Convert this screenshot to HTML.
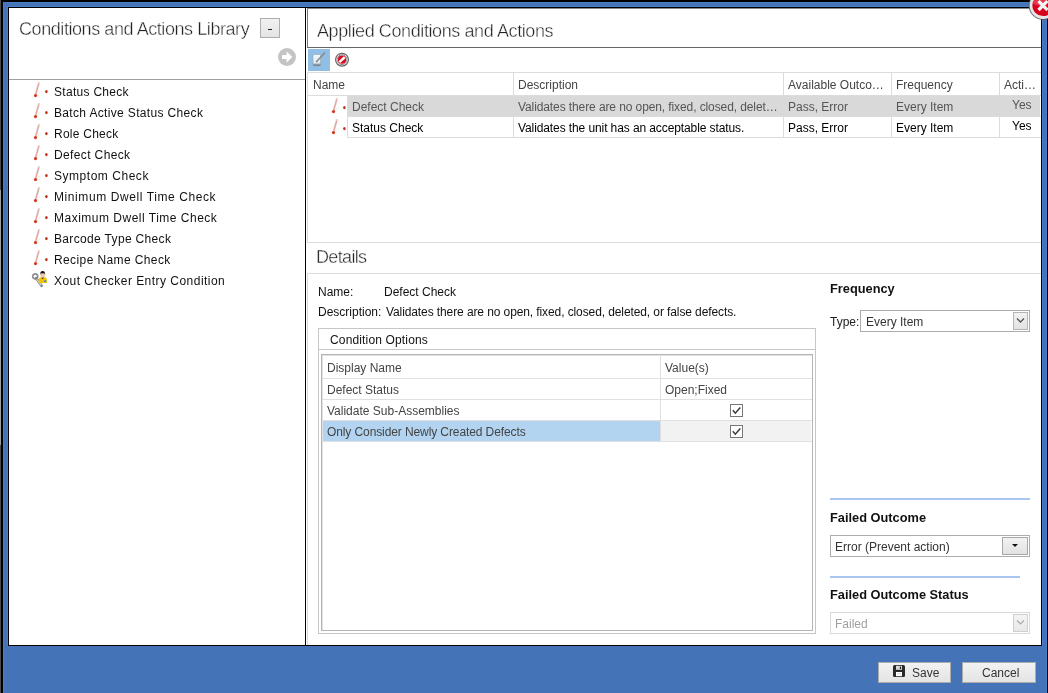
<!DOCTYPE html>
<html><head><meta charset="utf-8">
<style>
*{box-sizing:border-box;margin:0;padding:0}
html,body{width:1048px;height:693px;overflow:hidden;background:#fff}
body{position:relative;font-family:"Liberation Sans",sans-serif;font-size:12px;color:#000}
.a{position:absolute}
.t{position:absolute;white-space:nowrap;font-size:12px;line-height:12px;will-change:transform}
svg{display:block}
</style></head><body>
<div class="a" style="left:0px;top:0px;width:1048px;height:693px;background:#000;"></div>
<div class="a" style="left:0px;top:0px;width:1px;height:693px;background:#4a4a4a;"></div>
<div class="a" style="left:0px;top:190px;width:1px;height:255px;background:#9aa0a0;"></div>
<div class="a" style="left:3px;top:2px;width:1044px;height:691px;background:#4473b8;"></div>
<div class="a" style="left:3px;top:2px;width:1044px;height:1px;background:#4a7ec8;"></div>
<div class="a" style="left:7px;top:6px;width:1036px;height:1px;background:#4a7ec8;"></div>
<div class="a" style="left:3px;top:2px;width:1px;height:691px;background:#4a7ec8;"></div>
<div class="a" style="left:7px;top:6px;width:1px;height:640px;background:#4a7ec8;"></div>
<div class="a" style="left:1042px;top:6px;width:1px;height:640px;background:#4a7ec8;"></div>
<div class="a" style="left:1046px;top:2px;width:1px;height:691px;background:#4a7ec8;"></div>
<div class="a" style="left:8px;top:7px;width:1034px;height:639px;background:#000;"></div>
<div class="a" style="left:9px;top:8px;width:1032px;height:637px;background:#fff;"></div>
<div class="t" style="left:19px;top:20px;font-size:18px;line-height:18px;color:#222;letter-spacing:-0.43px;-webkit-text-stroke:0.4px #fff">Conditions and Actions Library</div>
<div class="a" style="left:260px;top:18px;width:20px;height:20px;background:linear-gradient(#f1f1f1,#e4e4e4);border:1px solid #adadad"></div>
<div class="a" style="left:268px;top:29px;width:4px;height:1px;background:#222;"></div>
<svg class="a" style="left:277px;top:47px" width="20" height="20" viewBox="0 0 20 20">
<circle cx="10" cy="10" r="9" fill="#c4c4c4"/>
<path d="M5 8h4.6V4.3l5.6 5.7-5.6 5.7v-3.7H5z" fill="#fff"/>
</svg>
<div class="a" style="left:9px;top:79px;width:296px;height:1px;background:#a0a0a0;"></div>
<div class="a" style="left:305px;top:8px;width:1px;height:637px;background:#000;"></div>
<svg class="a" style="left:31px;top:82px" width="18" height="18" viewBox="0 0 18 18">
<path d="M7.9 0.9 L4.6 12.6" stroke="#e2d6d6" stroke-width="2.1" stroke-linecap="round"/>
<path d="M7.7 1.6 L4.7 12.4" stroke="#eb9c90" stroke-width="1"/>
<path d="M9.5 9 L6 13" stroke="#efefef" stroke-width="1.1"/>
<circle cx="4.5" cy="13.6" r="1.6" fill="#d6381f"/>
<ellipse cx="15.4" cy="9.6" rx="1.3" ry="1.6" fill="#c0321e"/>
</svg>
<div class="t" style="left:54px;top:86px;font-size:12px;line-height:12px;color:#111;letter-spacing:0.29px;">Status Check</div>
<svg class="a" style="left:31px;top:103px" width="18" height="18" viewBox="0 0 18 18">
<path d="M7.9 0.9 L4.6 12.6" stroke="#e2d6d6" stroke-width="2.1" stroke-linecap="round"/>
<path d="M7.7 1.6 L4.7 12.4" stroke="#eb9c90" stroke-width="1"/>
<path d="M9.5 9 L6 13" stroke="#efefef" stroke-width="1.1"/>
<circle cx="4.5" cy="13.6" r="1.6" fill="#d6381f"/>
<ellipse cx="15.4" cy="9.6" rx="1.3" ry="1.6" fill="#c0321e"/>
</svg>
<div class="t" style="left:54px;top:107px;font-size:12px;line-height:12px;color:#111;letter-spacing:0.34px;">Batch Active Status Check</div>
<svg class="a" style="left:31px;top:124px" width="18" height="18" viewBox="0 0 18 18">
<path d="M7.9 0.9 L4.6 12.6" stroke="#e2d6d6" stroke-width="2.1" stroke-linecap="round"/>
<path d="M7.7 1.6 L4.7 12.4" stroke="#eb9c90" stroke-width="1"/>
<path d="M9.5 9 L6 13" stroke="#efefef" stroke-width="1.1"/>
<circle cx="4.5" cy="13.6" r="1.6" fill="#d6381f"/>
<ellipse cx="15.4" cy="9.6" rx="1.3" ry="1.6" fill="#c0321e"/>
</svg>
<div class="t" style="left:54px;top:128px;font-size:12px;line-height:12px;color:#111;letter-spacing:0.25px;">Role Check</div>
<svg class="a" style="left:31px;top:145px" width="18" height="18" viewBox="0 0 18 18">
<path d="M7.9 0.9 L4.6 12.6" stroke="#e2d6d6" stroke-width="2.1" stroke-linecap="round"/>
<path d="M7.7 1.6 L4.7 12.4" stroke="#eb9c90" stroke-width="1"/>
<path d="M9.5 9 L6 13" stroke="#efefef" stroke-width="1.1"/>
<circle cx="4.5" cy="13.6" r="1.6" fill="#d6381f"/>
<ellipse cx="15.4" cy="9.6" rx="1.3" ry="1.6" fill="#c0321e"/>
</svg>
<div class="t" style="left:54px;top:149px;font-size:12px;line-height:12px;color:#111;letter-spacing:0.37px;">Defect Check</div>
<svg class="a" style="left:31px;top:166px" width="18" height="18" viewBox="0 0 18 18">
<path d="M7.9 0.9 L4.6 12.6" stroke="#e2d6d6" stroke-width="2.1" stroke-linecap="round"/>
<path d="M7.7 1.6 L4.7 12.4" stroke="#eb9c90" stroke-width="1"/>
<path d="M9.5 9 L6 13" stroke="#efefef" stroke-width="1.1"/>
<circle cx="4.5" cy="13.6" r="1.6" fill="#d6381f"/>
<ellipse cx="15.4" cy="9.6" rx="1.3" ry="1.6" fill="#c0321e"/>
</svg>
<div class="t" style="left:54px;top:170px;font-size:12px;line-height:12px;color:#111;letter-spacing:0.53px;">Symptom Check</div>
<svg class="a" style="left:31px;top:187px" width="18" height="18" viewBox="0 0 18 18">
<path d="M7.9 0.9 L4.6 12.6" stroke="#e2d6d6" stroke-width="2.1" stroke-linecap="round"/>
<path d="M7.7 1.6 L4.7 12.4" stroke="#eb9c90" stroke-width="1"/>
<path d="M9.5 9 L6 13" stroke="#efefef" stroke-width="1.1"/>
<circle cx="4.5" cy="13.6" r="1.6" fill="#d6381f"/>
<ellipse cx="15.4" cy="9.6" rx="1.3" ry="1.6" fill="#c0321e"/>
</svg>
<div class="t" style="left:54px;top:191px;font-size:12px;line-height:12px;color:#111;letter-spacing:0.59px;">Minimum Dwell Time Check</div>
<svg class="a" style="left:31px;top:208px" width="18" height="18" viewBox="0 0 18 18">
<path d="M7.9 0.9 L4.6 12.6" stroke="#e2d6d6" stroke-width="2.1" stroke-linecap="round"/>
<path d="M7.7 1.6 L4.7 12.4" stroke="#eb9c90" stroke-width="1"/>
<path d="M9.5 9 L6 13" stroke="#efefef" stroke-width="1.1"/>
<circle cx="4.5" cy="13.6" r="1.6" fill="#d6381f"/>
<ellipse cx="15.4" cy="9.6" rx="1.3" ry="1.6" fill="#c0321e"/>
</svg>
<div class="t" style="left:54px;top:212px;font-size:12px;line-height:12px;color:#111;letter-spacing:0.5px;">Maximum Dwell Time Check</div>
<svg class="a" style="left:31px;top:229px" width="18" height="18" viewBox="0 0 18 18">
<path d="M7.9 0.9 L4.6 12.6" stroke="#e2d6d6" stroke-width="2.1" stroke-linecap="round"/>
<path d="M7.7 1.6 L4.7 12.4" stroke="#eb9c90" stroke-width="1"/>
<path d="M9.5 9 L6 13" stroke="#efefef" stroke-width="1.1"/>
<circle cx="4.5" cy="13.6" r="1.6" fill="#d6381f"/>
<ellipse cx="15.4" cy="9.6" rx="1.3" ry="1.6" fill="#c0321e"/>
</svg>
<div class="t" style="left:54px;top:233px;font-size:12px;line-height:12px;color:#111;letter-spacing:0.34px;">Barcode Type Check</div>
<svg class="a" style="left:31px;top:250px" width="18" height="18" viewBox="0 0 18 18">
<path d="M7.9 0.9 L4.6 12.6" stroke="#e2d6d6" stroke-width="2.1" stroke-linecap="round"/>
<path d="M7.7 1.6 L4.7 12.4" stroke="#eb9c90" stroke-width="1"/>
<path d="M9.5 9 L6 13" stroke="#efefef" stroke-width="1.1"/>
<circle cx="4.5" cy="13.6" r="1.6" fill="#d6381f"/>
<ellipse cx="15.4" cy="9.6" rx="1.3" ry="1.6" fill="#c0321e"/>
</svg>
<div class="t" style="left:54px;top:254px;font-size:12px;line-height:12px;color:#111;letter-spacing:0.39px;">Recipe Name Check</div>
<svg class="a" style="left:30px;top:268px" width="20" height="20" viewBox="0 0 20 20">
<path d="M6 10 L11.6 17.8" stroke="#7d7d7d" stroke-width="2.6" stroke-linecap="round"/>
<path d="M6.6 11 L11.2 17.2" stroke="#d6e4f4" stroke-width="1.1"/>
<circle cx="5.2" cy="8.4" r="2.5" fill="none" stroke="#8f8f8f" stroke-width="1.7"/>
<path d="M8.6 12 Q8.6 9.4 11.2 9.3 L14.2 9.3 Q16.9 9.4 16.9 12 L16.9 15 L8.6 15 Z" fill="#f1c400"/>
<path d="M11.3 9.3 L12.7 11.2 L14.1 9.3 Z" fill="#1a1a1a"/>
<ellipse cx="12.7" cy="7.4" rx="2.2" ry="2.4" fill="#f3c6a6"/>
<path d="M10.2 7.2 Q10 3 12.7 3 Q15.3 3 15.1 7.2 L14.6 5.6 Q12.7 5.1 10.8 5.6 Z" fill="#111"/>
<path d="M14 12.6 L16.2 11.9 L16.2 14 L14 14 Z" fill="#3d8fe0"/>
</svg>
<div class="t" style="left:54px;top:275px;font-size:12px;line-height:12px;color:#111;letter-spacing:0.47px;">Xout Checker Entry Condition</div>
<div class="a" style="left:307px;top:8px;width:1px;height:40px;background:#7a7a7a;"></div>
<div class="a" style="left:307px;top:8px;width:734px;height:1px;background:#8a8a8a;"></div>
<div class="a" style="left:307px;top:47px;width:734px;height:1px;background:#666;"></div>
<div class="t" style="left:317px;top:22px;font-size:18px;line-height:18px;color:#222;letter-spacing:-0.4px;-webkit-text-stroke:0.4px #fff">Applied Conditions and Actions</div>
<div class="a" style="left:308px;top:49px;width:22px;height:22px;background:#90bee4;"></div>
<svg class="a" style="left:311px;top:51px" width="16" height="18" viewBox="0 0 16 18">
<defs><linearGradient id="pg" x1="0" y1="0" x2="0" y2="1"><stop offset="0" stop-color="#f4f8fb"/><stop offset="0.75" stop-color="#dce8ef"/><stop offset="1" stop-color="#4f5f68"/></linearGradient></defs>
<rect x="2" y="3.5" width="7.6" height="11.2" rx="1" fill="url(#pg)" stroke="#8898a2" stroke-width="0.5"/>
<path d="M13.6 2 L5.6 10.4" stroke="#7c7c7c" stroke-width="1.5" stroke-linecap="round"/>
<path d="M13.4 2.2 L6.2 9.8" stroke="#dcdcdc" stroke-width="0.5" stroke-dasharray="0.7 0.7"/>
</svg>
<svg class="a" style="left:334px;top:52px" width="16" height="16" viewBox="0 0 16 16">
<circle cx="8" cy="7.7" r="6.4" fill="#fff" stroke="#666" stroke-width="1.2"/>
<circle cx="8" cy="7.7" r="4.9" fill="none" stroke="#8c8c8c" stroke-width="1"/>
<circle cx="8" cy="7.7" r="4.1" fill="#e2051f"/>
<path d="M5.3 10.1 L10.7 5.3" stroke="#fff" stroke-width="2.5"/>
</svg>
<div class="a" style="left:307px;top:72px;width:734px;height:1px;background:#dcdcdc;"></div>
<div class="a" style="left:307px;top:72px;width:1px;height:171px;background:#dcdcdc;"></div>
<div class="a" style="left:307px;top:95px;width:734px;height:1px;background:#dcdcdc;"></div>
<div class="a" style="left:513px;top:73px;width:1px;height:65px;background:#dcdcdc;"></div>
<div class="a" style="left:783px;top:73px;width:1px;height:65px;background:#dcdcdc;"></div>
<div class="a" style="left:891px;top:73px;width:1px;height:65px;background:#dcdcdc;"></div>
<div class="a" style="left:999px;top:73px;width:1px;height:65px;background:#dcdcdc;"></div>
<div class="a" style="left:348px;top:96px;width:692px;height:20px;background:#d9d9d9;"></div>
<div class="a" style="left:347px;top:96px;width:1px;height:42px;background:#dcdcdc;"></div>
<div class="a" style="left:348px;top:116px;width:693px;height:1px;background:#dcdcdc;"></div>
<div class="a" style="left:347px;top:137px;width:694px;height:1px;background:#dcdcdc;"></div>
<div class="t" style="left:313px;top:79px;font-size:12px;line-height:12px;color:#444;">Name</div>
<div class="t" style="left:518px;top:79px;font-size:12px;line-height:12px;color:#444;">Description</div>
<div class="t" style="left:788px;top:79px;font-size:12px;line-height:12px;color:#444;">Available Outco…</div>
<div class="t" style="left:896px;top:79px;font-size:12px;line-height:12px;color:#444;">Frequency</div>
<div class="t" style="left:1004px;top:79px;font-size:12px;line-height:12px;color:#444;">Acti…</div>
<svg class="a" style="left:329px;top:98px" width="18" height="18" viewBox="0 0 18 18">
<path d="M7.9 0.9 L4.6 12.6" stroke="#e2d6d6" stroke-width="2.1" stroke-linecap="round"/>
<path d="M7.7 1.6 L4.7 12.4" stroke="#eb9c90" stroke-width="1"/>
<path d="M9.5 9 L6 13" stroke="#efefef" stroke-width="1.1"/>
<circle cx="4.5" cy="13.6" r="1.6" fill="#d6381f"/>
<ellipse cx="15.4" cy="9.6" rx="1.3" ry="1.6" fill="#c0321e"/>
</svg>
<div class="t" style="left:352px;top:101px;font-size:12px;line-height:12px;color:#555;">Defect Check</div>
<div class="t" style="left:518px;top:101px;font-size:12px;line-height:12px;color:#555;letter-spacing:-0.1px;">Validates there are no open, fixed, closed, delet…</div>
<div class="t" style="left:788px;top:101px;font-size:12px;line-height:12px;color:#555;">Pass, Error</div>
<div class="t" style="left:896px;top:101px;font-size:12px;line-height:12px;color:#555;">Every Item</div>
<div class="t" style="left:1012px;top:99px;font-size:12px;line-height:12px;color:#555;">Yes</div>
<svg class="a" style="left:329px;top:119px" width="18" height="18" viewBox="0 0 18 18">
<path d="M7.9 0.9 L4.6 12.6" stroke="#e2d6d6" stroke-width="2.1" stroke-linecap="round"/>
<path d="M7.7 1.6 L4.7 12.4" stroke="#eb9c90" stroke-width="1"/>
<path d="M9.5 9 L6 13" stroke="#efefef" stroke-width="1.1"/>
<circle cx="4.5" cy="13.6" r="1.6" fill="#d6381f"/>
<ellipse cx="15.4" cy="9.6" rx="1.3" ry="1.6" fill="#c0321e"/>
</svg>
<div class="t" style="left:352px;top:122px;font-size:12px;line-height:12px;color:#000;">Status Check</div>
<div class="t" style="left:518px;top:122px;font-size:12px;line-height:12px;color:#000;letter-spacing:-0.1px;">Validates the unit has an acceptable status.</div>
<div class="t" style="left:788px;top:122px;font-size:12px;line-height:12px;color:#000;">Pass, Error</div>
<div class="t" style="left:896px;top:122px;font-size:12px;line-height:12px;color:#000;">Every Item</div>
<div class="t" style="left:1012px;top:120px;font-size:12px;line-height:12px;color:#000;">Yes</div>
<div class="a" style="left:307px;top:242px;width:734px;height:1px;background:#dcdcdc;"></div>
<div class="t" style="left:316px;top:248px;font-size:18px;line-height:18px;color:#222;letter-spacing:-0.65px;-webkit-text-stroke:0.4px #fff">Details</div>
<div class="a" style="left:307px;top:273px;width:734px;height:1px;background:#dcdcdc;"></div>
<div class="a" style="left:307px;top:273px;width:1px;height:372px;background:#dcdcdc;"></div>
<div class="t" style="left:318px;top:286px;font-size:12px;line-height:12px;color:#111;">Name:</div>
<div class="t" style="left:384px;top:286px;font-size:12px;line-height:12px;color:#111;">Defect Check</div>
<div class="t" style="left:318px;top:306px;font-size:12px;line-height:12px;color:#111;">Description:</div>
<div class="t" style="left:386px;top:306px;font-size:12px;line-height:12px;color:#111;letter-spacing:-0.1px;">Validates there are no open, fixed, closed, deleted, or false defects.</div>
<div class="a" style="left:318px;top:328px;width:498px;height:306px;background:transparent;border:1px solid #c6c6c6"></div>
<div class="a" style="left:319px;top:349px;width:496px;height:1px;background:#c6c6c6;"></div>
<div class="t" style="left:330px;top:334px;font-size:12px;line-height:12px;color:#111;letter-spacing:0.15px;">Condition Options</div>
<div class="a" style="left:321px;top:354px;width:492px;height:277px;background:transparent;border:1px solid #b4b4b4;box-shadow:inset 1px 1px 0 #e2e2e2"></div>
<div class="a" style="left:323px;top:378px;width:489px;height:1px;background:#e0e0e0;"></div>
<div class="a" style="left:323px;top:399px;width:489px;height:1px;background:#e0e0e0;"></div>
<div class="a" style="left:323px;top:420px;width:489px;height:1px;background:#e0e0e0;"></div>
<div class="a" style="left:323px;top:441px;width:489px;height:1px;background:#e0e0e0;"></div>
<div class="a" style="left:323px;top:421px;width:337px;height:20px;background:#b2d4f0;"></div>
<div class="a" style="left:661px;top:421px;width:150px;height:20px;background:#f2f2f2;"></div>
<div class="a" style="left:660px;top:356px;width:1px;height:85px;background:#e0e0e0;"></div>
<div class="t" style="left:327px;top:362px;font-size:12px;line-height:12px;color:#444;">Display Name</div>
<div class="t" style="left:665px;top:362px;font-size:12px;line-height:12px;color:#444;">Value(s)</div>
<div class="t" style="left:327px;top:384px;font-size:12px;line-height:12px;color:#444;">Defect Status</div>
<div class="t" style="left:665px;top:384px;font-size:12px;line-height:12px;color:#444;">Open;Fixed</div>
<div class="t" style="left:327px;top:405px;font-size:12px;line-height:12px;color:#444;">Validate Sub-Assemblies</div>
<div class="t" style="left:327px;top:426px;font-size:12px;line-height:12px;color:#444;letter-spacing:-0.1px;">Only Consider Newly Created Defects</div>
<svg class="a" style="left:730px;top:404px" width="13" height="13" viewBox="0 0 13 13">
<rect x="0.5" y="0.5" width="12" height="12" fill="#fff" stroke="#777"/>
<path d="M2.8 6.3 L5.3 9.2 L10.3 3.4" fill="none" stroke="#3a3a3a" stroke-width="1.5"/>
</svg>
<svg class="a" style="left:730px;top:425px" width="13" height="13" viewBox="0 0 13 13">
<rect x="0.5" y="0.5" width="12" height="12" fill="#fff" stroke="#777"/>
<path d="M2.8 6.3 L5.3 9.2 L10.3 3.4" fill="none" stroke="#3a3a3a" stroke-width="1.5"/>
</svg>
<div class="t" style="left:830px;top:283px;font-size:12.8px;line-height:12.8px;color:#111;font-weight:bold;">Frequency</div>
<div class="t" style="left:830px;top:316px;font-size:12px;line-height:12px;color:#222;">Type:</div>
<div class="a" style="left:860px;top:310px;width:170px;height:22px;background:#fff;border:1px solid #acacac"></div>
<div class="t" style="left:866px;top:316px;font-size:12px;line-height:12px;color:#333;">Every Item</div>
<div class="a" style="left:1013px;top:312px;width:15px;height:18px;background:linear-gradient(#f2f2f2,#e2e2e2);border:1px solid #b5b5b5"></div>
<svg class="a" style="left:1016px;top:317px" width="9" height="7" viewBox="0 0 9 7"><path d="M1 1.5 L4.5 5 L8 1.5" fill="none" stroke="#555" stroke-width="1.3"/></svg>
<div class="a" style="left:830px;top:498px;width:200px;height:2px;background:#a9c5f0;"></div>
<div class="t" style="left:830px;top:512px;font-size:12.8px;line-height:12.8px;color:#111;font-weight:bold;">Failed Outcome</div>
<div class="a" style="left:830px;top:535px;width:200px;height:22px;background:#fff;border:1px solid #acacac"></div>
<div class="t" style="left:835px;top:541px;font-size:12px;line-height:12px;color:#333;">Error (Prevent action)</div>
<div class="a" style="left:1002px;top:537px;width:26px;height:18px;background:linear-gradient(#f2f2f2,#e2e2e2);border:1px solid #a8a8a8"></div>
<svg class="a" style="left:1011px;top:543px" width="8" height="5" viewBox="0 0 8 5"><path d="M1 1 L7 1 L4 4 Z" fill="#111"/></svg>
<div class="a" style="left:830px;top:576px;width:190px;height:2px;background:#a9c5f0;"></div>
<div class="t" style="left:830px;top:589px;font-size:12.8px;line-height:12.8px;color:#111;font-weight:bold;">Failed Outcome Status</div>
<div class="a" style="left:830px;top:612px;width:200px;height:22px;background:#fff;border:1px solid #d9d9d9"></div>
<div class="t" style="left:835px;top:618px;font-size:12px;line-height:12px;color:#a0a0a0;">Failed</div>
<div class="a" style="left:1013px;top:614px;width:15px;height:18px;background:linear-gradient(#f4f4f4,#e8e8e8);border:1px solid #cfcfcf"></div>
<svg class="a" style="left:1016px;top:619px" width="9" height="7" viewBox="0 0 9 7"><path d="M1 1.5 L4.5 5 L8 1.5" fill="none" stroke="#aaa" stroke-width="1.2"/></svg>
<div class="a" style="left:878px;top:662px;width:73px;height:21px;background:linear-gradient(#f2f2f2,#e4e4e4);border:1px solid #acacac"></div>
<div class="a" style="left:962px;top:662px;width:74px;height:21px;background:linear-gradient(#f2f2f2,#e4e4e4);border:1px solid #acacac"></div>
<svg class="a" style="left:893px;top:665px" width="12" height="12" viewBox="0 0 12 12">
<rect x="0" y="0" width="12" height="12" rx="1.5" fill="#2a2a2a"/>
<rect x="3" y="0.8" width="6" height="4" fill="#d8d8d8"/>
<rect x="6.8" y="1.6" width="1.2" height="2.4" fill="#222"/>
<rect x="3" y="7" width="6" height="4.2" fill="#fff"/>
<rect x="4" y="8.4" width="4" height="0.8" fill="#ccc"/>
</svg>
<div class="t" style="left:912px;top:667px;font-size:12px;line-height:12px;color:#333;">Save</div>
<div class="t" style="left:982px;top:667px;font-size:12px;line-height:12px;color:#333;">Cancel</div>
<svg class="a" style="left:1024px;top:0px" width="24" height="24" viewBox="1024 0 24 24">
<circle cx="1043" cy="5.5" r="14.3" fill="#5a5a5a"/>
<circle cx="1043" cy="5.5" r="13.4" fill="#e6e6e6"/>
<circle cx="1043" cy="5.5" r="10.6" fill="#d8001c"/>
<path d="M1033 4 A10.6 10.6 0 0 1 1050 -3 L1040 6 Z" fill="#ee5a6a" opacity="0.6"/>
<path d="M1038.5 1 L1047.5 10 M1047.5 1 L1038.5 10" stroke="#f4f4f4" stroke-width="3.2"/>
</svg>
</body></html>
